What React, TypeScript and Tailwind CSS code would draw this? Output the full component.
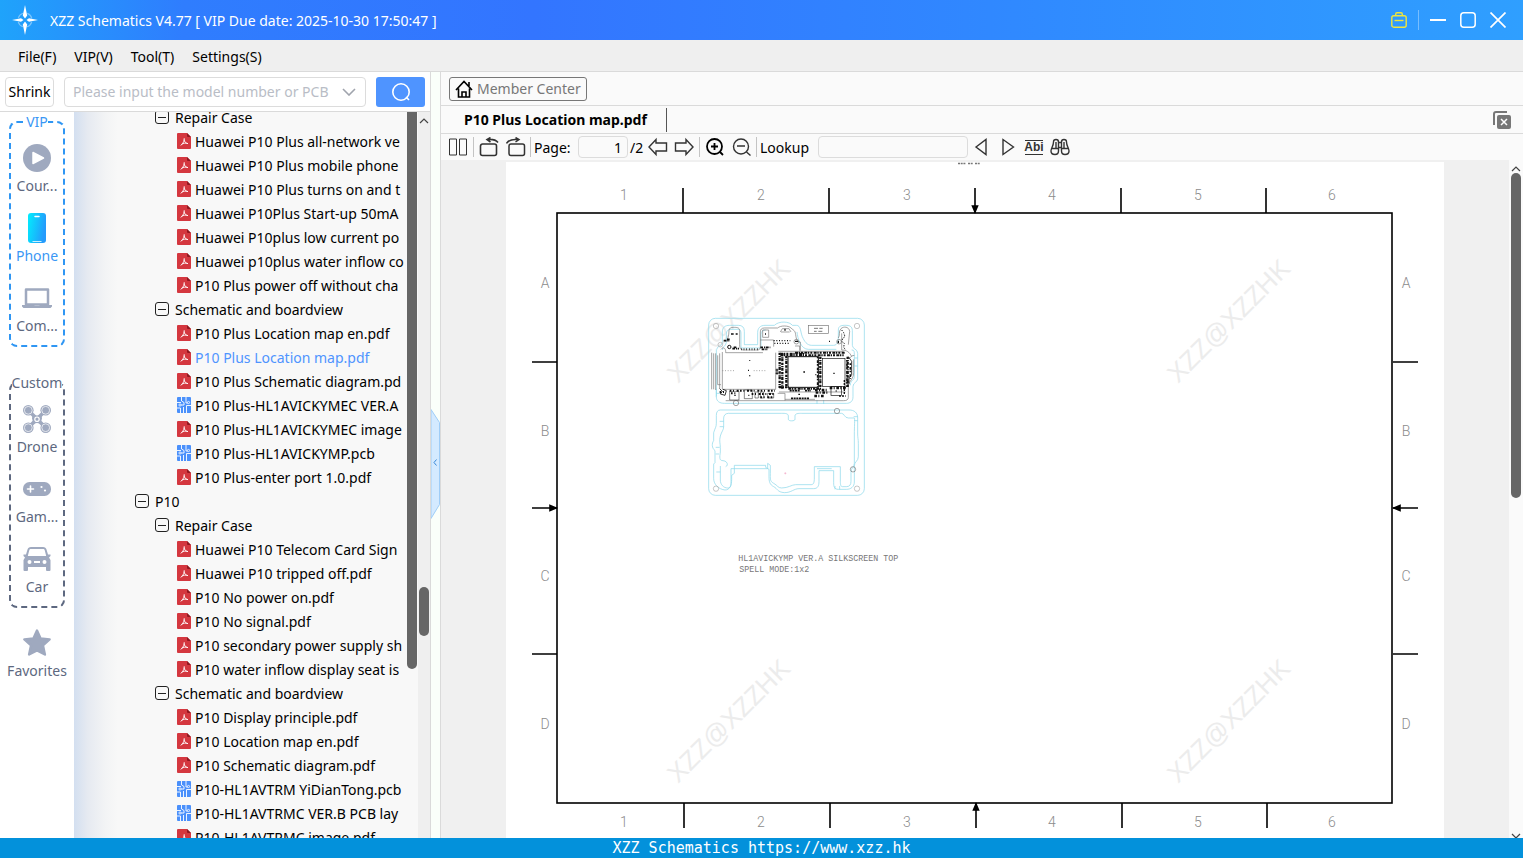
import type { ReactNode } from "react";

type Kind = "pdf" | "pcb" | "group" | "folder";
type Row = { kind: Kind; label: string; active?: boolean };

const rows: Row[] = [
  { kind: "folder", label: "Repair Case" },
  { kind: "pdf", label: "Huawei P10 Plus all-network ve" },
  { kind: "pdf", label: "Huawei P10 Plus mobile phone" },
  { kind: "pdf", label: "Huawei P10 Plus turns on and t" },
  { kind: "pdf", label: "Huawei P10Plus Start-up 50mA" },
  { kind: "pdf", label: "Huawei P10plus low current po" },
  { kind: "pdf", label: "Huawei p10plus water inflow co" },
  { kind: "pdf", label: "P10 Plus power off without cha" },
  { kind: "folder", label: "Schematic and boardview" },
  { kind: "pdf", label: "P10 Plus Location map en.pdf" },
  { kind: "pdf", label: "P10 Plus Location map.pdf", active: true },
  { kind: "pdf", label: "P10 Plus Schematic diagram.pd" },
  { kind: "pcb", label: "P10 Plus-HL1AVICKYMEC VER.A" },
  { kind: "pdf", label: "P10 Plus-HL1AVICKYMEC image" },
  { kind: "pcb", label: "P10 Plus-HL1AVICKYMP.pcb" },
  { kind: "pdf", label: "P10 Plus-enter port 1.0.pdf" },
  { kind: "group", label: "P10" },
  { kind: "folder", label: "Repair Case" },
  { kind: "pdf", label: "Huawei P10 Telecom Card Sign" },
  { kind: "pdf", label: "Huawei P10 tripped off.pdf" },
  { kind: "pdf", label: "P10 No power on.pdf" },
  { kind: "pdf", label: "P10 No signal.pdf" },
  { kind: "pdf", label: "P10 secondary power supply sh" },
  { kind: "pdf", label: "P10 water inflow display seat is" },
  { kind: "folder", label: "Schematic and boardview" },
  { kind: "pdf", label: "P10 Display principle.pdf" },
  { kind: "pdf", label: "P10 Location map en.pdf" },
  { kind: "pdf", label: "P10 Schematic diagram.pdf" },
  { kind: "pcb", label: "P10-HL1AVTRM YiDianTong.pcb" },
  { kind: "pcb", label: "P10-HL1AVTRMC VER.B PCB lay" },
  { kind: "pdf", label: "P10-HL1AVTRMC image.pdf" },
];

const indent: Record<Kind, string> = {
  group: "pl-[61px] gap-[6px]",
  folder: "pl-[81px] gap-[6px]",
  pdf: "pl-[103px] gap-1",
  pcb: "pl-[103px] gap-1",
};

function RowIcon({ kind }: { kind: Kind }) {
  if (kind === "pdf")
    return (
      <svg width="14" height="16" viewBox="0 0 14 16" className="shrink-0">
        <path d="M1 0h9l4 4v11a1 1 0 0 1-1 1H1a1 1 0 0 1-1-1V1a1 1 0 0 1 1-1z" fill="#d4373f" />
        <path d="M10 0l4 4h-3a1 1 0 0 1-1-1z" fill="#8f1820" />
        <path d="M7.200 5.200c.5 2-.8 5-3.400 7.300M7 6.500c.3 2.200 1.600 3.600 4 4.200M4.600 11.300c1.800-1.200 4-1.500 6.200-.8" fill="none" stroke="#fff" strokeWidth=".9" />
      </svg>
    );
  if (kind === "pcb")
    return (
      <svg width="14" height="16" viewBox="0 0 14 16" className="shrink-0">
        <rect width="14" height="16" rx="1" fill="#4a90fb" />
        <path d="M4.500 0v4l2.500 1.500v2.500H4M0 5.500h4M9 0v6h2M14 8.500H9.500V16M6.500 10v6M0 11h3.500v5" fill="none" stroke="#fff" strokeWidth=".9" />
        <circle cx="3" cy="8" r="1.100" fill="#4a90fb" stroke="#fff" strokeWidth=".8" />
        <circle cx="11.500" cy="5.500" r="1.100" fill="#4a90fb" stroke="#fff" strokeWidth=".8" />
      </svg>
    );
  return (
    <svg width="14" height="14" viewBox="0 0 14 14" className="shrink-0" fill="none" stroke="#222">
      <rect x=".5" y=".5" width="13" height="13" rx="2.500" />
      <path d="M3 7.500h8" />
    </svg>
  );
}

function SideItem({ label, icon, active }: { label: string; icon: ReactNode; active?: boolean }) {
  return (
    <button className={"flex w-full flex-col items-center whitespace-nowrap text-[14px] leading-4 " + (active ? "text-[#3a97f5]" : "text-[#5d6880]")}>
      <span className="flex h-10 items-center">{icon}</span>
      <span>{label}</span>
    </button>
  );
}

const gray = "#9fa9bf";

const PlayIcon = (
  <svg width="28" height="28" viewBox="0 0 28 28">
    <circle cx="14" cy="14" r="14" fill={gray} />
    <path d="M10 8.500v11l10.500-5.500z" fill="#fff" stroke="#fff" strokeWidth="1.500" strokeLinejoin="round" />
  </svg>
);
const PhoneIcon = (
  <svg width="18" height="30" viewBox="0 0 18 30">
    <defs>
      <linearGradient id="phone" x1="0" y1="0" x2="1" y2="0.3">
        <stop offset="0" stopColor="#02eefd" />
        <stop offset="1" stopColor="#249bfc" />
      </linearGradient>
    </defs>
    <rect width="18" height="30" rx="3" fill="url(#phone)" />
    <path d="M7 3.500h4" stroke="#fff" strokeWidth="1.500" strokeLinecap="round" />
    <path d="M4.500 28.500h9" stroke="#c8f1ff" />
  </svg>
);
const LaptopIcon = (
  <svg width="30" height="20" viewBox="0 0 30 20">
    <path d="M4 1.500h22v15H4z" fill="none" stroke={gray} strokeWidth="2.500" strokeLinejoin="round" />
    <path d="M0 17h12l1 1h4l1-1h12v1.500l-1.500 1.500h-27L0 18.500z" fill={gray} />
  </svg>
);
const DroneIcon = (
  <svg width="28" height="28" viewBox="0 0 28 28">
    <path d="M6 6l16 16M22 6L6 22" stroke={gray} strokeWidth="3.600" />
    <path d="M9.500 9.500q4.500 2 9 0l.5 4-1.500 5q-3.500-1-7 0L9 13.500z" fill={gray} />
    {[[5.300, 5.300], [22.700, 5.300], [5.300, 22.700], [22.700, 22.700]].map(([x, y]) => (
      <g key={x + "-" + y}>
        <circle cx={x} cy={y} r="5.300" fill={gray} />
        <circle cx={x} cy={y} r="3.900" fill="none" stroke="#fff" strokeWidth=".7" />
      </g>
    ))}
    <circle cx="14" cy="14.200" r="2.200" fill={gray} stroke="#fff" strokeWidth="1.200" />
  </svg>
);
const GameIcon = (
  <svg width="28" height="14" viewBox="0 0 28 14">
    <rect width="28" height="14" rx="6.500" fill={gray} />
    <path d="M4.500 7h6M7.500 4v6" stroke="#fff" strokeWidth="1.600" strokeLinecap="round" />
    <circle cx="18.500" cy="5" r="1.100" fill="#fff" />
    <circle cx="22" cy="8.500" r="1.100" fill="#fff" />
  </svg>
);
const CarIcon = (
  <svg width="28" height="24" viewBox="0 0 28 24">
    <path
      fillRule="evenodd"
      fill={gray}
      d="M8 0h12c2 0 3 1 3.500 2.500L25 7.500h2.500V9L26 10.500l1.500 2.500v10a1 1 0 0 1-1 1H24a1 1 0 0 1-1-1v-3H5v3a1 1 0 0 1-1 1H1.500a1 1 0 0 1-1-1V13L2 10.500.5 9V7.500H3l1.500-5C5 1 6 0 8 0zM8 2c-1 0-1.500.5-1.800 1.400L4.800 9h18.400l-1.400-5.600C21.500 2.500 21 2 20 2zM6.500 13a2 2 0 1 0 0 4 2 2 0 0 0 0-4zM21.500 13a2 2 0 1 0 0 4 2 2 0 0 0 0-4zM11 14v2h6v-2z"
    />
  </svg>
);
const StarIcon = (
  <svg width="28" height="28" viewBox="0 0 28 28">
    <path d="M14 1.500l3.600 8 9 .9-6.600 6 1.900 9.100L14 21.500l-7.900 4L8 16.400l-6.600-6 9-.9z" fill={gray} stroke={gray} strokeWidth="2.400" strokeLinejoin="round" />
  </svg>
);

function SideGroup({ title, tone, children }: { title: string; tone: string; children: ReactNode }) {
  return (
    <fieldset className={"mx-auto flex w-14 min-w-0 flex-col rounded-lg border-2 border-dashed pb-[11px] " + tone}>
      <legend className="mx-auto text-center text-[14px] leading-5">{title}</legend>
      <div className="flex flex-col gap-[14px] pt-[6px]">{children}</div>
    </fieldset>
  );
}

const topTicks = [683, 829, 1121, 1266];
const sideTicks = [362, 654];
const columns: [string, number][] = [["1", 624], ["2", 761], ["3", 907], ["4", 1052], ["5", 1198], ["6", 1332]];
const letters: [string, number][] = [["A", 288], ["B", 436], ["C", 581], ["D", 729]];
const marks = [[678, 384], [1178, 384], [678, 784], [1178, 784]];

function Board() {
  return (
    <g transform="translate(695 310) scale(0.33333)" fill="none" strokeWidth="2">
      <g stroke="#8fd9ea" strokeWidth="2.200">
        <rect x="41" y="25" width="467" height="531" rx="20" />
        <path d="M66 118c0-12 14-6 16-20V66c0-14 8-20 22-20h26c12 0 18 6 18 18v40h40V68c0-14 8-22 22-22h28c14-14 46-12 54 0h12c14 0 12 20 18 34s14 26 28 26h66c12 0 14-14 14-26V60c0-14 12-14 22-14s20 2 20 16v44c0 12 16 10 16 24v76c0 12-14 10-14 24v30c0 14-8 20-20 20H88c-14 0-24-6-24-20V118" />
        <path d="M82 120c0-12 10-10 12-22V72c0-10 6-14 14-14h20c8 0 10 4 10 14v42h60V74c0-10 6-14 14-14M306 66c2 20 12 52 34 52h84M470 120c8 0 8 4 8 14v66c0 12-12 10-12 26M64 236v24M64 250h12M478 144h10M478 168h10M366 282v-12M386 282v-12" />
        <path d="M84 300h378c16 0 26 8 26 24v48c0 12 2 14 2 28v40c0 14-12 14-12 28v48c0 14-10 22-24 22h-24c-12 0-14-8-14-20v-36h-44v32c0 14-4 22-16 22h-44c-16 0-22 12-44 12-22-2-20-12-32-18s-14-16-14-30v-22l-10-6V466H118v24l-8 6v12c0 18-6 32-20 32-18-2-34-16-34-34v-44l4-4v-36c-10-8-10-22-4-30v-24c4-14 8-16 8-28v-24c0-10 4-16 12-16z" />
        <path d="M100 310h160c10 0 20 0 20 8v10c0 6 20 6 20 0v-10c0-8 10-8 20-8h120c8 0 8 14 20 14h18c2 0 0 30 0 48v88c0 12-10 14-10 26v28c0 10-4 16-14 16h-12c-6 0-6-10-6-20v-40h-78v34c0 14-2 20-10 20h-46c-12 0-22 10-42 10-12 0-12-8-24-14s-10-16-10-30v-24l-8-6V476H108v44c0 12-4 14-10 14-12 0-22-10-22-24v-42M92 470c10-4 4-18-8-18s-10-10-8-26v-14c0-10-4-20 0-34s10-18 10-28v-26c0-8 6-14 14-14M74 334h12M74 350h12M62 412h12M72 432h-10M64 486h12M476 320h12M478 332h10M420 538v-10M434 538v-10M366 476h44" />
      </g>
      <g stroke="#aaa">
        <circle cx="63" cy="48" r="8" />
        <circle cx="486" cy="48" r="8" />
        <circle cx="63" cy="536" r="8" />
        <circle cx="486" cy="536" r="8" />
        <circle cx="123" cy="279" r="8" stroke="#777" />
        <circle cx="426" cy="303" r="8" stroke="#777" />
        <circle cx="474" cy="478" r="8" stroke="#777" />
        <circle cx="76" cy="104" r="7" />
      </g>
      <g stroke="#777">
        <rect x="340" y="47" width="60" height="23" />
        <path d="M357 55h12M373 55h10M357 64h8M370 64h12" strokeWidth="3" />
        <path d="M50 128v110M56 130v108M62 130v110M68 136v88h10M74 130v106" />
        <path d="M78 118c6-8 14-4 14 6v4h112M82 126v112h160V128M92 96c6-6 10-20 10-34 0-8 6-10 14-10s18 0 18 10v42c0 12 2 16 14 16h40c6 0 8-4 8-10V66c0-8 4-12 12-12h40c8-8 32-8 40 0s12 6 14 20 4 22 14 22v26M430 84c6-8 0-20 8-28s24-6 26 8l-4 40M478 136c-12 0-12 10-18 10M440 70v50c14 0 24 6 30 20M476 148v40c0 20-14 24-16 40v34c0 8-6 10-14 10H92M248 250h22v22M300 108h14v14M196 90h40v20M203 60h18v22h-18zM258 66h26" />
        <path d="M252 246h200M250 124h196M270 268h90" />
      </g>
      <g stroke="#111">
        <rect x="279" y="140" width="91" height="92" strokeWidth="3" />
        <rect x="382" y="146" width="68" height="84" />
        <path d="M254 128v106M262 130v106M274 138v96M376 140v94M458 140v92" strokeWidth="7" strokeDasharray="7 3 3 2 9 4" />
        <path d="M256 131h72M300 128h150M256 136h190M280 236h98M252 232h30" strokeWidth="6" strokeDasharray="9 2 4 3 6 4" />
        <path d="M456 150v80M466 160v46M368 140v90" strokeWidth="5" strokeDasharray="5 6 8 3" />
        <path d="M360 240h36M362 248h40M358 258h28M404 234h50" strokeWidth="7" strokeDasharray="8 4 3 5" />
        <rect x="408" y="230" width="32" height="26" />
        <path d="M432 258h20M448 210v44" strokeWidth="4" strokeDasharray="6 3" />
        <path d="M104 242h136M108 250h20M170 252h66M196 262h40M74 246h18" strokeWidth="6" strokeDasharray="5 5 3 8 6 4" />
        <path d="M104 244v26h28v-26zM148 240v26h24v-26zM180 246v18h10v-18zM196 246v18h10v-18zM218 250v14h18v-14z" strokeWidth="1.500" />
        <path d="M284 242h30M330 242h18M288 265h54" strokeWidth="5" strokeDasharray="6 2" />
        <path d="M236 92h50M238 100h46" strokeWidth="4" strokeDasharray="3 5" />
        <path d="M86 92h18M96 88h10M112 116h20M116 112h10M196 112h30M200 118h18M108 72h8M122 72h6" strokeWidth="5" strokeDasharray="8 3 4 2" />
        <circle cx="103" cy="111" r="5" strokeWidth="3" />
        <path d="M138 118h50" strokeDasharray="2 6" strokeWidth="6" />
        <path d="M82 182h40M176 182h38" strokeDasharray="3 5" stroke="#777" />
        <path d="M164 150v2M164 196v3M159 181h3M325 186h5M361 194h3M415 190h4M310 253h5M422 243h3M160 256h3M118 256h4M210 72h3M270 56v6M300 94h10M402 94h3M430 92v8" strokeWidth="4" />
        <path d="M440 60l6 8 4 12-6 4-4 10 8 6-2 12 6 8" strokeDasharray="4 4" strokeWidth="3" />
        <path d="M246 176v18M242 180h8M242 190h8" strokeWidth="3" />
        <path d="M74 236l8 8-6 8 14 4 4-14-10-4M448 236l14-16v-16l8-10v-40l-10-14" strokeWidth="2.500" />
        <circle cx="304" cy="95" r="7" stroke="#777" />
        <circle cx="432" cy="95" r="7" stroke="#777" />
        <path d="M256 66l6-10h20l6 10" stroke="#777" />
      </g>
      <path d="M268 490h6M271 487v6" stroke="#f3a6c6" />
      <g fill="#777" stroke="none" fontSize="25" fontFamily="Liberation Mono, monospace">
        <text x="130" y="753">HL1AVICKYMP VER.A SILKSCREEN TOP</text>
        <text x="133" y="787">SPELL MODE:1x2</text>
      </g>
    </g>
  );
}

function Drawing() {
  return (
    <svg width="938" height="676" viewBox="506 162 938 676" className="block shrink-0 bg-white" role="img" aria-label="Silkscreen top">
      <g fill="#ececec" fontSize="26" fontFamily="Liberation Sans, sans-serif">
        {marks.map(([x, y]) => (
          <text key={x + "-" + y} transform={"translate(" + x + " " + y + ") rotate(-45)"}>XZZ@XZZHK</text>
        ))}
      </g>
      <g stroke="#000" strokeWidth="1.600" fill="none">
        <rect x="557" y="213" width="835" height="590" />
        {topTicks.map((x) => (
          <path key={x} d={"M" + x + " 188V213M" + (x + 1) + " 803V828"} />
        ))}
        {sideTicks.map((y) => (
          <path key={y} d={"M532 " + y + "H557M1393 " + y + "H1418"} />
        ))}
        <path d="M975 188v25M976 803v25M532 508h25M1393 508h25" />
        <path d="M972.500 206h5l-2.500 6zM973.500 810h5l-2.500-6zM550 505.500v5l6-2.500zM1400 505.500v5l-6-2.500z" fill="#000" />
      </g>
      <path d="M958 163.500h8M968 163.500h5M975 163.500h5" stroke="#777" strokeWidth="1.500" strokeDasharray="2 .7" />
      <g fill="#8c8c8c" fontSize="14" textAnchor="middle" fontWeight="300" fontFamily="Roboto, sans-serif">
        {columns.map(([t, x]) => (
          <g key={t}>
            <text x={x} y="200">{t}</text>
            <text x={x} y="827">{t}</text>
          </g>
        ))}
        {letters.map(([t, y]) => (
          <g key={t}>
            <text x="545" y={y}>{t}</text>
            <text x="1406" y={y}>{t}</text>
          </g>
        ))}
      </g>
      <Board />
    </svg>
  );
}

function Tool({ label, children }: { label: string; children: ReactNode }) {
  return (
    <button aria-label={label} className="flex shrink-0 items-center text-[#333]">
      <svg width="20" height="20" viewBox="0 0 20 20" fill="none" stroke="currentColor" strokeWidth="1.400">
        {children}
      </svg>
    </button>
  );
}

const Divider = () => <span className="h-5 w-px shrink-0 bg-[#c4c4c4]" />;

export default function App() {
  return (
    <div className="flex h-screen flex-col overflow-hidden bg-[#f0f0f0] font-['Noto_Sans',sans-serif] text-[14px] text-black">
      <header className="flex h-10 shrink-0 items-center bg-[linear-gradient(90deg,#1fa3fb_0%,#2f7dfe_12%,#3375ff_35%,#3088ff_65%,#2f9fff_100%)] pr-[17px] pl-3 text-white">
        <svg width="26" height="30" viewBox="0 0 26 30" fill="#fff">
          <path d="M13 0l2.200 10.500-2.200 3-2.200-3zM13 30l2.200-10.500-2.200-3-2.200 3zM0 15l9-1.800 2.500 1.800L9 16.800zM26 15l-9-1.800-2.500 1.800 2.500 1.800z" />
          <circle cx="13" cy="15" r="7" fill="none" stroke="#fff" strokeOpacity=".4" strokeWidth="1.200" strokeDasharray="7 4" strokeDashoffset="-2" />
        </svg>
        <h1 className="ml-3 text-[14px]">XZZ Schematics V4.77 [ VIP Due date: 2025-10-30 17:50:47 ]</h1>
        <div className="ml-auto flex items-center">
          <button aria-label="Toolbox">
            <svg width="16" height="16" viewBox="0 0 16 16" fill="none" stroke="#f0e63c" strokeWidth="1.400">
              <path d="M4.700 4V2.200C4.700 1.300 5.200.8 6 .8h4c.8 0 1.300.5 1.300 1.400V4" />
              <rect x=".8" y="3.800" width="14.400" height="11.400" rx="2" />
              <path d="M3.500 8.500h9" />
            </svg>
          </button>
          <span className="mx-[11px] h-5 w-px bg-white/35" />
          <div className="flex items-center gap-[14px]">
            <button aria-label="Minimize">
              <svg width="16" height="16" viewBox="0 0 16 16" stroke="#fff" strokeWidth="2"><path d="M0 8h16" /></svg>
            </button>
            <button aria-label="Maximize">
              <svg width="16" height="16" viewBox="0 0 16 16" fill="none" stroke="#fff" strokeWidth="1.500"><rect x=".8" y=".8" width="14.400" height="14.400" rx="3" /></svg>
            </button>
            <button aria-label="Close">
              <svg width="16" height="16" viewBox="0 0 16 16" stroke="#fff" strokeWidth="1.700"><path d="M.5.5l15 15M15.500.5l-15 15" /></svg>
            </button>
          </div>
        </div>
      </header>

      <nav className="flex h-8 shrink-0 items-center gap-[18px] border-b border-[#dadada] bg-[#efefef] pt-[2px] pl-[18px]">
        <button>File(F)</button>
        <button>VIP(V)</button>
        <button>Tool(T)</button>
        <button>Settings(S)</button>
      </nav>

      <main className="flex min-h-0 flex-1">
        <section className="flex w-[431px] shrink-0 flex-col border-r border-[#dadada] bg-white">
          <div className="flex h-10 shrink-0 items-center border-b border-[#dadada] pr-[5px] pl-[5px]">
            <button className="h-[30px] w-[49px] rounded border border-[#dcdcdc]">Shrink</button>
            <label className="ml-[10px] flex h-[30px] min-w-0 flex-1 items-center rounded border border-[#dcdcdc] pr-[9px] pl-2">
              <input aria-label="Model number" placeholder="Please input the model number or PCB" className="min-w-0 flex-1 text-[14px] outline-none placeholder:text-[#b9bdc6]" />
              <svg width="14" height="8" viewBox="0 0 14 8" fill="none" stroke="#a0a4ad" strokeWidth="1.600" className="shrink-0"><path d="M1 1l6 6 6-6" /></svg>
            </label>
            <button aria-label="Search" className="ml-[10px] flex h-[30px] w-[49px] items-center justify-center rounded-[3px] bg-[#4f94ff]">
              <svg width="20" height="20" viewBox="0 0 20 20" fill="none" stroke="#fff" strokeWidth="1.600"><circle cx="10" cy="10" r="8.200" /><path d="M15 15l3 3" /></svg>
            </button>
          </div>
          <div className="flex min-h-0 flex-1">
            <aside className="flex w-[74px] shrink-0 flex-col overflow-hidden bg-white">
              <SideGroup title="VIP" tone="border-[#2f96f3] text-[#3a97f5]">
                <SideItem label="Cour..." icon={PlayIcon} />
                <SideItem label="Phone" icon={PhoneIcon} active />
                <SideItem label="Com..." icon={LaptopIcon} />
              </SideGroup>
              <div className="mt-[26px] mb-[15px]">
                <SideGroup title="Custom" tone="border-[#5d6880] text-[#5d6880]">
                  <SideItem label="Drone" icon={DroneIcon} />
                  <SideItem label="Gam..." icon={GameIcon} />
                  <SideItem label="Car" icon={CarIcon} />
                </SideGroup>
              </div>
              <SideItem label="Favorites" icon={StarIcon} />
            </aside>
            <div className="flex min-w-0 flex-1 overflow-hidden bg-[linear-gradient(90deg,#d3dff0_0px,#e6eaf1_14px,#f3f4f5_32px,#f8f8f8_44px)]">
              <ul className="-mt-[7px] min-w-0 flex-1 overflow-hidden">
                {rows.map((r, i) => (
                  <li key={i} className={"flex h-6 items-center whitespace-nowrap " + indent[r.kind]}>
                    <RowIcon kind={r.kind} />
                    <span className={r.active ? "text-[#4f94ff]" : ""}>{r.label}</span>
                  </li>
                ))}
              </ul>
              <div className="w-[11px] shrink-0">
                <div className="h-[557px] w-[10px] rounded-b-[5px] bg-[#666]" />
              </div>
            </div>
            <div className="flex w-3 shrink-0 flex-col items-center bg-[#efefef] pt-[6px]">
              <svg width="10" height="6" viewBox="0 0 10 6" fill="none" stroke="#444" strokeWidth="1.200"><path d="M1 5l4-4 4 4" /></svg>
              <div className="mt-[463px] h-[49px] w-[10px] rounded-full bg-[#666]" />
            </div>
          </div>
        </section>

        <div className="flex w-[9px] shrink-0 items-center bg-[#fafffa]">
          <button aria-label="Collapse panel" className="mt-[18px]">
            <svg width="9" height="110" viewBox="0 0 9 110" fill="none">
              <path d="M0 .5l8.500 13v82L0 109.500z" fill="#d4eaff" stroke="#9fcdf7" />
              <path d="M5.500 50.500L3 53.500l2.500 3" stroke="#3a88d8" />
            </svg>
          </button>
        </div>

        <section className="flex min-w-0 flex-1 flex-col border-l border-[#dadada]">
          <div className="flex h-[34px] shrink-0 items-center border-b border-[#dadada] bg-[#fafafa] pl-2">
            <button className="flex h-6 items-center gap-1 rounded-[3px] border border-[#777] px-[5px] text-[#777]">
              <svg width="18" height="18" viewBox="0 0 18 18" fill="none" stroke="#000" strokeWidth="1.600">
                <path d="M1 10l8-8.500 8 8.500M3.500 8.500v8.500h11V8.500M7 17v-5h4v5M14 2v4" />
              </svg>
              Member Center
            </button>
          </div>
          <div className="flex h-7 shrink-0 items-center border-b border-[#dadada] bg-[#fafafa] pr-3">
            <button className="h-6 border-r border-[#555] pr-[19px] pl-[23px] text-[14px] font-bold">P10 Plus Location map.pdf</button>
            <button aria-label="Close all tabs" className="ml-auto">
              <svg width="18" height="18" viewBox="0 0 18 18">
                <path d="M1 14V3a2 2 0 0 1 2-2h11" fill="none" stroke="#777" strokeWidth="2" />
                <rect x="4" y="4" width="14" height="14" rx="2" fill="#777" />
                <path d="M8 8l6 6M14 8l-6 6" stroke="#fff" strokeWidth="1.500" />
              </svg>
            </button>
          </div>
          <div className="flex h-[26px] shrink-0 items-center bg-[#fafafa] pl-[7px]">
            <Tool label="Two pages"><path d="M1.500 2h7v16h-7zM11.500 2h7v16h-7z" strokeWidth="1" /></Tool>
            <span className="w-[5px]" /><Divider /><span className="w-[5px]" />
            <Tool label="Rotate left"><path d="M3.500 7h12a2 2 0 0 1 2 2v7.500a2 2 0 0 1-2 2h-12a2 2 0 0 1-2-2V9a2 2 0 0 1 2-2zM19 5.500c-2-2.500-6-3.500-10.500-3M11.500.5L8 2.500l3.500 2.500" strokeWidth="1.600" /></Tool>
            <span className="w-[7px]" />
            <Tool label="Rotate right"><path d="M5 7h11.500a2 2 0 0 1 2 2v7.500a2 2 0 0 1-2 2H5a2 2 0 0 1-2-2V9a2 2 0 0 1 2-2zM.5 6.500c2-3.500 6-4.500 11-4M9.500.5L13 2.500 9.500 5" strokeWidth="1.500" /></Tool>
            <span className="w-[4px]" /><Divider />
            <label className="ml-[3px] flex items-center">
              <span className="w-[44px]">Page:</span>
              <input type="text" defaultValue="1" className="h-[22px] w-[50px] rounded-sm border border-[#dcdcdc] bg-[#fafafa] pr-[5px] text-right outline-none" />
            </label>
            <span className="ml-[2px] w-[18px]">/2</span>
            <Tool label="Previous page"><path d="M1 10l7-7.500V6h10.500v8H8v3.500z" /></Tool>
            <span className="w-[6px]" />
            <Tool label="Next page"><path d="M19 10l-7-7.500V6H1.500v8H12v3.500z" /></Tool>
            <span className="w-[5px]" /><Divider /><span className="w-[5px]" />
            <Tool label="Zoom in"><g stroke="#000" strokeWidth="1.800"><circle cx="9.500" cy="9.500" r="7.500" /><path d="M15 15l3 3M6 9.500h7M9.500 6v7" /></g></Tool>
            <span className="w-[7px]" />
            <Tool label="Zoom out"><circle cx="9" cy="9.500" r="7.500" /><path d="M14.500 15l4 3.500M5 9h8" /></Tool>
            <span className="w-[4px]" /><Divider />
            <label className="ml-[3px] flex items-center">
              <span className="w-[58px]">Lookup</span>
              <input type="text" className="h-[22px] w-[150px] rounded-sm border border-[#dcdcdc] bg-[#fafafa] outline-none" />
            </label>
            <span className="w-[4px]" />
            <Tool label="Find previous"><path d="M4 10L14 2.500v15z" /></Tool>
            <span className="w-[5px]" />
            <Tool label="Find next"><path d="M16.500 10L6 2.500v15z" /></Tool>
            <button className="ml-2 flex h-[15px] w-[18px] items-center justify-center border-y border-[#333] font-['Liberation_Sans',sans-serif] text-[12px] font-bold text-[#333]">Abi</button>
            <span className="w-[7px]" />
            <Tool label="Find in files">
              <path d="M3.500 5c0-1.500 1-2.500 2.500-2.500s2.500 1 2.500 2.500v9c0 2-1 3.500-3.500 3.500S1 16 1 14c0-3 2.500-5 2.500-9zM16.500 5c0-1.500-1-2.500-2.500-2.500S11.500 3.500 11.500 5v9c0 2 1 3.500 3.500 3.500S19 16 19 14c0-3-2.500-5-2.500-9zM8.500 5.500h3M8.500 10.500h3M1 11.500h7.500M11.500 11.500H19M6 5v6M14 5v6" />
            </Tool>
          </div>
          <div className="flex min-h-0 flex-1">
            <div className="flex min-w-0 flex-1 justify-center overflow-hidden pt-[2px]">
              <Drawing />
            </div>
            <div className="flex w-[14px] shrink-0 flex-col items-center bg-[#fafafa] pt-[6px]">
              <svg width="10" height="6" viewBox="0 0 10 6" fill="none" stroke="#444" strokeWidth="1.200" className="shrink-0"><path d="M1 5l4-4 4 4" /></svg>
              <div className="mt-px h-[325px] w-[10px] shrink-0 rounded-full bg-[#666]" />
              <svg width="10" height="5" viewBox="0 0 10 5" fill="none" stroke="#444" strokeWidth="1.200" className="mt-auto shrink-0"><path d="M1 1l4 4 4-4" /></svg>
            </div>
          </div>
        </section>
      </main>

      <footer className="flex h-5 shrink-0 items-center justify-center bg-[#0391db] font-['DejaVu_Sans_Mono',monospace] text-[15px] text-white">
        XZZ Schematics https://www.xzz.hk
      </footer>
    </div>
  );
}
